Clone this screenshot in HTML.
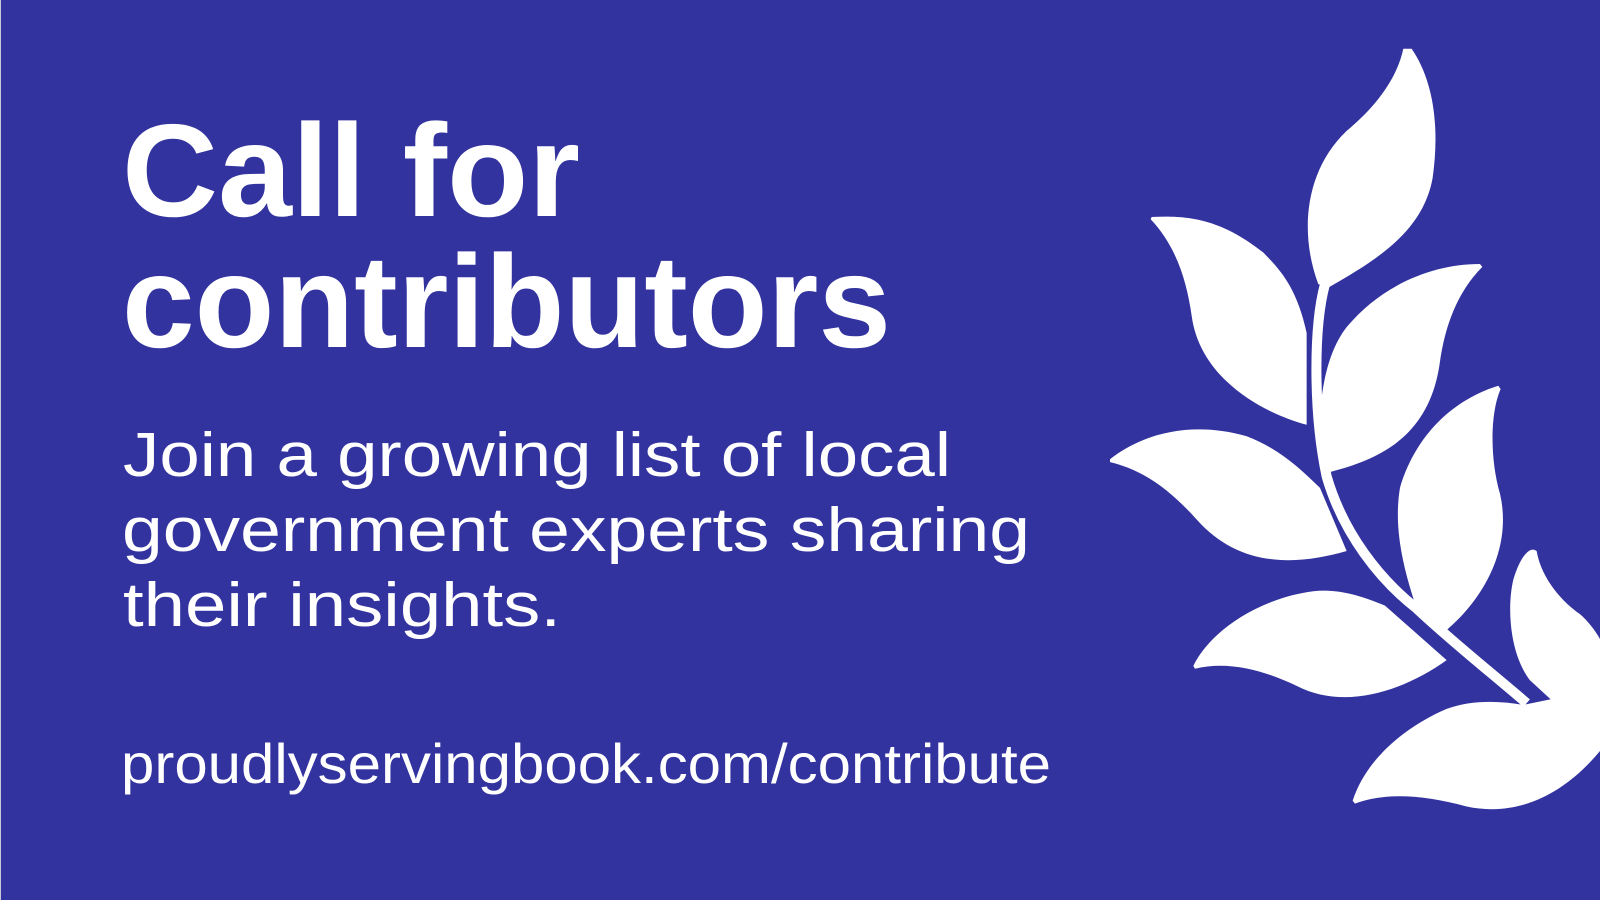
<!DOCTYPE html>
<html><head><meta charset="utf-8"><style>
html,body{margin:0;padding:0;background:#3333A0;}
svg{display:block}
</style></head><body>
<svg width="1600" height="900" viewBox="0 0 1600 900" xmlns="http://www.w3.org/2000/svg">
<rect width="1600" height="900" fill="#3333A0"/>
<rect x="0" y="0" width="1" height="900" fill="#c8c8d8"/>
<g font-family="Liberation Sans, sans-serif" fill="#fff">
<text x="122" y="216" font-size="132" font-weight="bold" textLength="458" lengthAdjust="spacingAndGlyphs">Call for</text>
<text x="122" y="347" font-size="132" font-weight="bold" textLength="769" lengthAdjust="spacingAndGlyphs">contributors</text>
<text x="123" y="476" font-size="62" textLength="828" lengthAdjust="spacingAndGlyphs">Join a growing list of local</text>
<text x="122" y="551" font-size="62" textLength="908" lengthAdjust="spacingAndGlyphs">government experts sharing</text>
<text x="123" y="626" font-size="62" textLength="438" lengthAdjust="spacingAndGlyphs">their insights.</text>
<text x="121" y="783" font-size="56" textLength="930" lengthAdjust="spacingAndGlyphs">proudlyservingbook.com/contribute</text>
</g>
<g transform="translate(1080,0) scale(0.3333,0.574)" fill="#fff">
<path d="M735,495 C700,570 700,720 740,830 C790,930 900,1010 1010,1060 C1120,1120 1230,1170 1340,1225" fill="none" stroke="#fff" stroke-width="10" vector-effect="non-scaling-stroke"/>
<path d="M715,495 C660,410 670,300 800,228 C880,190 950,140 970,85 L995,85 C1060,140 1080,220 1058,310 C1030,400 900,450 748,500 Z"/>
<path d="M680,580 C650,500 600,470 550,440 C420,380 320,375 215,378 L212,382 C290,430 320,490 335,550 C360,660 550,720 680,740 Z"/>
<path d="M718,740 C725,650 760,600 800,570 C900,500 1050,460 1200,460 L1207,465 C1130,510 1095,570 1080,630 C1050,760 900,800 752,822 Z"/>
<path d="M720,850 C650,810 590,780 500,760 C350,735 200,750 90,800 L90,805 C200,820 280,860 350,905 C480,990 650,985 800,960 Z"/>
<path d="M1010,1060 C970,990 940,920 960,850 C1000,770 1100,700 1255,672 L1262,678 C1230,720 1230,800 1260,860 C1300,960 1200,1050 1095,1100 Z"/>
<path d="M915,1055 C850,1040 780,1025 700,1030 C560,1040 400,1090 340,1160 L345,1165 C450,1150 560,1170 650,1195 C800,1240 980,1200 1100,1150 Z"/>
<path d="M1350,1185 C1290,1140 1280,1060 1300,1010 C1320,970 1350,950 1370,960 C1385,1010 1450,1050 1500,1070 C1530,1085 1560,1110 1565,1120 L1565,1300 Z"/>
<path d="M1330,1228 C1250,1220 1170,1220 1100,1235 C980,1265 860,1320 818,1395 L825,1400 C920,1380 1030,1385 1160,1405 C1320,1425 1460,1380 1565,1305 L1565,1200 Z"/>
</g>
</svg>
</body></html>
